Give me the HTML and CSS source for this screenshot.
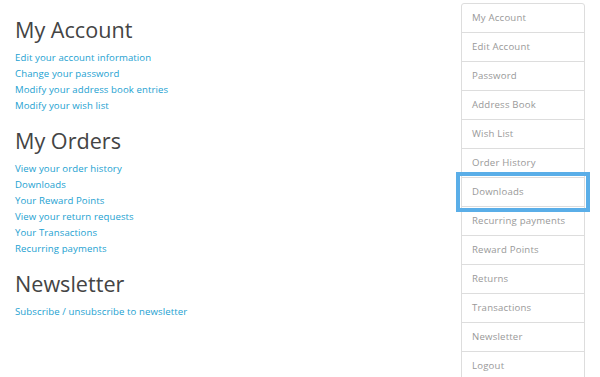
FILE: index.html
```html
<!DOCTYPE html>
<html>
<head>
<meta charset="utf-8">
<link rel="stylesheet" href="styles.css">
</head>
<body>
<div class="page">
  <main class="content">
    <h2 class="title">My Account</h2>
    <ul class="links">
      <li><a href="#">Edit your account information</a></li>
      <li><a href="#">Change your password</a></li>
      <li><a href="#">Modify your address book entries</a></li>
      <li><a href="#">Modify your wish list</a></li>
    </ul>
    <h2 class="title">My Orders</h2>
    <ul class="links">
      <li><a href="#">View your order history</a></li>
      <li><a href="#">Downloads</a></li>
      <li><a href="#">Your Reward Points</a></li>
      <li><a href="#">View your return requests</a></li>
      <li><a href="#">Your Transactions</a></li>
      <li><a href="#">Recurring payments</a></li>
    </ul>
    <h2 class="title">Newsletter</h2>
    <ul class="links">
      <li><a href="#">Subscribe / unsubscribe to newsletter</a></li>
    </ul>
  </main>
  <aside class="sidebar">
    <nav class="list-group">
      <a class="item" href="#">My Account</a>
      <a class="item" href="#">Edit Account</a>
      <a class="item" href="#">Password</a>
      <a class="item" href="#">Address Book</a>
      <a class="item" href="#">Wish List</a>
      <a class="item" href="#">Order History</a>
      <a class="item focused" href="#">Downloads</a>
      <a class="item" href="#">Recurring payments</a>
      <a class="item" href="#">Reward Points</a>
      <a class="item" href="#">Returns</a>
      <a class="item" href="#">Transactions</a>
      <a class="item" href="#">Newsletter</a>
      <a class="item" href="#">Logout</a>
    </nav>
  </aside>
</div>
</body>
</html>
```

FILE: styles.css
```css
html, body {
  margin: 0;
  padding: 0;
  background: #fff;
  font-family: "Open Sans", "DejaVu Sans", sans-serif;
  font-size: 9.6px;
  color: #666;
  overflow: hidden;
}

.page {
  display: flex;
  align-items: flex-start;
  padding: 0 15px;
  gap: 15px;
}

.content {
  flex: 1;
  padding-top: 5px;
}

.title {
  font-size: 21.6px;
  line-height: 24px;
  font-weight: 400;
  color: #444;
  margin: 15px 0 8px;
}

.title:first-child {
  margin-top: 13px;
}

.links {
  list-style: none;
  margin: 0;
  padding: 0;
}

.links li {
  line-height: 16px;
  letter-spacing: 0.1px;
}

.links a {
  color: #23a1d1;
  text-decoration: none;
}

.sidebar {
  width: 124px;
  margin-top: 3px;
  flex-shrink: 0;
}

.list-group {
  display: flex;
  flex-direction: column;
}

.item {
  display: block;
  padding: 6px 10px;
  line-height: 16px;
  border: 1px solid #ddd;
  margin-bottom: -1px;
  color: #999;
  letter-spacing: 0.2px;
  text-decoration: none;
  background: #fff;
}

.item:first-child {
  border-radius: 3px 3px 0 0;
}

.item.focused {
  position: relative;
  z-index: 1;
  outline: 4px solid #5aaee8;
  outline-offset: 1px;
}
```
